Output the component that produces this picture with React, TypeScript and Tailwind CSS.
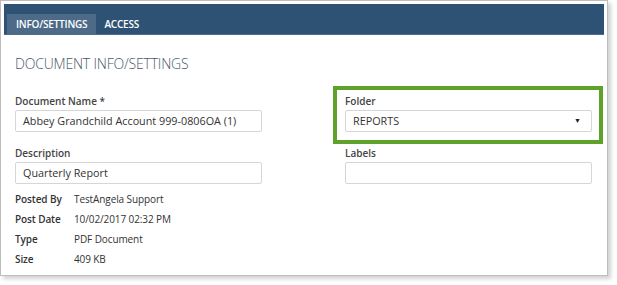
const font = { fontFamily: '"Open Sans", "Noto Sans", sans-serif' };

function Field({ label, value, select }: { label: string; value: string; select?: boolean }) {
	return (
		<div className="flex flex-col">
			<div className="h-[18px] flex items-center text-[10px] font-semibold text-[#444]">{label}</div>
			<div className="h-[22px] border border-[#d6d6d6] rounded-[2px] flex items-center justify-between px-[7px] text-[10.8px] text-[#333]">
				<span>{value}</span>
				{select && <span className="text-[7px] text-[#222] mr-[3px]">▼</span>}
			</div>
		</div>
	);
}

function Meta({ k, v }: { k: string; v: string }) {
	return (
		<div className="flex h-[20px] items-center text-[10px] tracking-[-0.1px] text-[#333]">
			<div className="w-[59px] font-semibold">{k}</div>
			<div>{v}</div>
		</div>
	);
}

export default function App() {
	return (
		<div className="w-[617px] h-[285px] bg-white" style={font}>
			<div className="w-[608px] h-[276px] border border-[#bdbdbd] bg-white p-[3px] shadow-[3px_3px_4px_rgba(0,0,0,0.18)]">
				<div className="h-[31px] bg-[#2e5273] border-b border-[#4a6d8e] flex items-end pl-[3px]">
					<div className="h-[20px] px-[9px] bg-[#4d6b88] text-white text-[10px] tracking-[-0.2px] font-semibold flex items-center">INFO/SETTINGS</div>
					<div className="h-[20px] px-[8px] text-white text-[10px] tracking-[-0.2px] font-semibold flex items-center">ACCESS</div>
				</div>
				<div className="px-[11px]">
					<div className="h-[20px] mt-[18px] flex items-center text-[14px] tracking-[-0.2px] font-light text-[#4a5868]">DOCUMENT INFO/SETTINGS</div>
					<div className="mt-[19px] grid grid-cols-[247px_247px] gap-x-[83px] gap-y-[12px]">
						<Field label="Document Name *" value="Abbey Grandchild Account 999-0806OA (1)" />
						<div className="relative">
							<div className="absolute -left-[12px] -top-[6px] -right-[11px] -bottom-[12px] border-4 border-[#5ea12b]" />
							<Field label="Folder" value="REPORTS" select />
						</div>
						<Field label="Description" value="Quarterly Report" />
						<Field label="Labels" value="" />
					</div>
					<div className="mt-[5px]">
						<Meta k="Posted By" v="TestAngela Support" />
						<Meta k="Post Date" v="10/02/2017 02:32 PM" />
						<Meta k="Type" v="PDF Document" />
						<Meta k="Size" v="409 KB" />
					</div>
				</div>
			</div>
		</div>
	);
}
